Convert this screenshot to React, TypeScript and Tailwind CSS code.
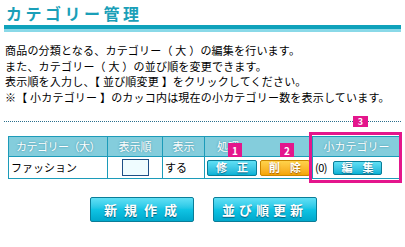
const jp = { fontFamily: '"Noto Sans CJK JP", "Liberation Sans", sans-serif' };

function CyanButton({ label, w, h, text }: { label: string; w: string; h: string; text: string }) {
  return (
    <button
      className={`${w} ${h} ${text} flex items-center justify-center rounded-[2px] border border-[#0a7d98] bg-gradient-to-b from-[#5fe0f5] via-[#10c4e4] to-[#00a8cc] font-bold text-white [text-shadow:0_1px_1px_rgba(0,60,90,0.7)]`}
    >
      {label}
    </button>
  );
}

export default function App() {
  return (
    <div className="relative h-[247px] w-[405px] overflow-hidden bg-white text-black" style={jp}>
      <div className="px-[4px] pt-[3px]">
        <h1 className="pl-[2px] text-[16px] font-bold leading-[20px] tracking-[3.5px] text-[#1a9fb8]">
          カテゴリー管理
        </h1>
        <div className="mt-[2px] h-[4px] bg-[#0fa2bb]" />
        <div className="h-[3px] bg-[#8ad9e8]" />

        <div className="mt-[11px] pl-[1px] text-[11px] leading-[15.5px] tracking-[0.2px]">
          <p>商品の分類となる、カテゴリー（ 大 ）の編集を行います。</p>
          <p>また、カテゴリー（ 大 ）の並び順を変更できます。</p>
          <p>表示順を入力し、【 並び順変更 】をクリックしてください。</p>
          <p>※【 小カテゴリー 】のカッコ内は現在の小カテゴリー数を表示しています。</p>
        </div>

        <div className="mt-[16px] border-t border-dotted border-[#2a6f8c]" />

        <table className="ml-[4px] mt-[14px] border-collapse text-[11px]">
          <thead>
            <tr className="h-[20px] bg-[#84cddc] text-white [text-shadow:0_0_2px_rgba(40,120,140,0.8)]">
              <th className="w-[99px] border border-[#1c9bb9] p-0 font-normal tracking-[-0.5px]">カテゴリー（大）</th>
              <th className="w-[55px] border border-[#1c9bb9] p-0 font-normal">表示順</th>
              <th className="w-[42px] border border-[#1c9bb9] p-0 font-normal">表示</th>
              <th className="w-[106px] border border-[#1c9bb9] p-0 text-left pl-[12px] font-normal">処理</th>
              <th className="w-[88px] border border-[#1c9bb9] p-0 font-normal">小カテゴリー</th>
            </tr>
          </thead>
          <tbody>
            <tr className="h-[22px]">
              <td className="border border-[#1c9bb9] px-[2px]">ファッション</td>
              <td className="border border-[#1c9bb9]">
                <div className="mx-auto h-[17px] w-[27px] border border-[#1d4f86] bg-[#effcff]" />
              </td>
              <td className="border border-[#1c9bb9] px-[2px]">する</td>
              <td className="border border-[#1c9bb9] px-[2px]">
                <div className="flex gap-[3px]">
                  <button className="flex h-[16px] w-[50px] items-center justify-center gap-[10px] rounded-[2px] border border-[#0a7d98] bg-gradient-to-b from-[#5fe0f5] to-[#00b2d6] text-[11px] font-bold text-white [text-shadow:0_1px_1px_rgba(0,60,90,0.7)]">
                    <span>修</span>
                    <span>正</span>
                  </button>
                  <button className="flex h-[16px] w-[50px] items-center justify-center gap-[10px] rounded-[2px] border border-[#c98600] bg-gradient-to-b from-[#ffd34a] to-[#f5a500] text-[11px] font-bold text-white [text-shadow:0_1px_1px_rgba(120,60,0,0.7)]">
                    <span>削</span>
                    <span>除</span>
                  </button>
                </div>
              </td>
              <td className="border border-[#1c9bb9] pl-[2px] pr-[3px]">
                <div className="flex items-center gap-[6px]">
                  <span className="tracking-[-0.5px]">(0)</span>
                  <button className="flex h-[14px] w-[49px] shrink-0 items-center justify-center gap-[10px] rounded-[2px] border border-[#0a7d98] bg-gradient-to-b from-[#5fe0f5] to-[#00b2d6] text-[11px] font-bold text-white [text-shadow:0_1px_1px_rgba(0,60,90,0.7)]">
                    <span>編</span>
                    <span>集</span>
                  </button>
                </div>
              </td>
            </tr>
          </tbody>
        </table>

        <div className="mt-[18px] flex justify-center gap-[19px] pl-[1px]">
          <CyanButton label="新 規 作 成" w="w-[104px]" h="h-[25px]" text="text-[13px] tracking-[2px]" />
          <CyanButton label="並び順更新" w="w-[104px]" h="h-[25px]" text="text-[13px] tracking-[4px]" />
        </div>
      </div>

      {/* annotations */}
      <div className="absolute left-[309px] top-[132px] h-[51px] w-[93px] border-[3px] border-[#e4168c]" />
      <div className="absolute left-[228px] top-[143px] flex h-[14px] w-[14px] items-center justify-center bg-[#e4168c] text-[10px] font-bold text-white">1</div>
      <div className="absolute left-[280px] top-[143px] flex h-[14px] w-[14px] items-center justify-center bg-[#e4168c] text-[10px] font-bold text-white">2</div>
      <div className="absolute left-[353px] top-[116px] flex h-[11px] w-[15px] items-center justify-center bg-[#e4168c] text-[9px] font-bold text-white">3</div>
    </div>
  );
}
